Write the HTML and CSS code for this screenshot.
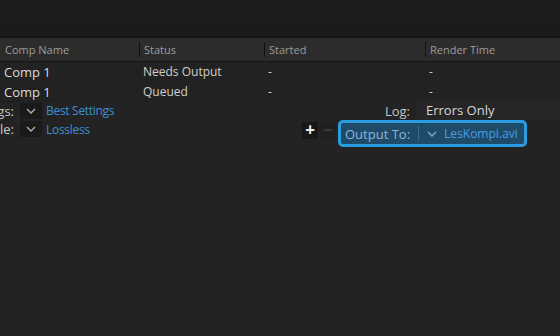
FILE: index.html
```html
<!DOCTYPE html>
<html>
<head>
	<title>Render Queue</title>
	<link rel="stylesheet" href="styles.css">
</head>
<body>
	<div class="top-band"></div>
	<div class="queue">
		<div class="row head">
			<div class="cell c1">Comp Name</div>
			<div class="cell c2">Status</div>
			<div class="cell c3">Started</div>
			<div class="cell c4">Render Time</div>
		</div>
		<div class="row item">
			<div class="cell c1 name">Comp 1</div>
			<div class="cell c2">Needs Output</div>
			<div class="cell c3">-</div>
			<div class="cell c4">-</div>
		</div>
		<div class="row item alt">
			<div class="cell c1 name">Comp 1</div>
			<div class="cell c2">Queued</div>
			<div class="cell c3">-</div>
			<div class="cell c4">-</div>
		</div>
	</div>
	<div class="settings">
		<div class="set-row">
			<div class="set-label"><span>Render Settings:</span></div>
			<div class="drop"><svg width="10" height="6" viewBox="0 0 10 6"><path d="M1 1l4 4 4-4" fill="none" stroke="#b0b0b0" stroke-width="1.4"/></svg></div>
			<a class="link">Best Settings</a>
			<div class="spacer"></div>
			<div class="log-label">Log:</div>
			<div class="log-field">Errors Only</div>
		</div>
		<div class="set-row second">
			<div class="set-label"><span>Output Module:</span></div>
			<div class="drop"><svg width="10" height="6" viewBox="0 0 10 6"><path d="M1 1l4 4 4-4" fill="none" stroke="#b0b0b0" stroke-width="1.4"/></svg></div>
			<a class="link">Lossless</a>
			<div class="spacer"></div>
			<div class="btn plus">+</div>
			<div class="btn minus">&minus;</div>
			<div class="output-to">
				<span class="out-label">Output To:</span>
				<span class="out-sep"></span>
				<svg width="10" height="6" viewBox="0 0 10 6"><path d="M1 1l4 4 4-4" fill="none" stroke="#7fa9cc" stroke-width="1.4"/></svg>
				<a class="out-file">LesKompi.avi</a>
			</div>
		</div>
	</div>
</body>
</html>
```

FILE: styles.css
```css
body {
	margin: 0;
	width: 560px;
	height: 336px;
	overflow: hidden;
	background-color: #232323;
	font-family: "Open Sans", "Noto Sans", sans-serif;
	font-size: 12px;
	color: #cfcfcf;
}
.top-band {
	height: 37px;
	background: linear-gradient(#1d1d1d, #1a1a1a);
	border-bottom: 1px solid #121212;
}
.row {
	display: flex;
	align-items: center;
}
.head {
	height: 23px;
	background-color: #2c2c2c;
	border-bottom: 1px solid #151515;
	font-size: 11px;
	color: #9c9c9c;
}
.item {
	height: 19px;
	background-color: #222;
	border-bottom: 1px solid #1e1e1e;
}
.cell {
	box-sizing: border-box;
	padding-left: 4px;
	white-space: nowrap;
}
.head .cell {
	border-left: 1px solid #111;
	height: 15px;
	line-height: 15px;
}
.head .c1 {
	border-left: none;
	padding-left: 5px;
}
.c1 { width: 139px; }
.c2 { width: 125px; }
.c3 { width: 161px; }
.c4 { flex: 1; }
.name {
	font-size: 13px;
	color: #dadada;
}
.settings {
	margin-top: -1px;
}
.set-row {
	display: flex;
	align-items: center;
	height: 19px;
}
.set-row.second {
	align-items: flex-start;
	height: 27px;
}
.set-label {
	width: 14px;
	overflow: hidden;
	display: flex;
	justify-content: flex-end;
	white-space: nowrap;
	color: #c8c8c8;
	font-size: 13px;
	margin-right: 6px;
}
.second .set-label,
.second .drop,
.second .link {
	margin-top: 1px;
	line-height: 17px;
}
.drop {
	width: 22px;
	height: 16px;
	background-color: #1a1a1a;
	display: flex;
	align-items: center;
	justify-content: center;
}
.link {
	color: #3b8ed8;
	margin-left: 4px;
	font-size: 12px;
	letter-spacing: -0.3px;
}
.spacer {
	flex: 1;
}
.log-label {
	color: #c4c4c4;
	font-size: 13px;
	margin-right: 7px;
}
.log-field {
	width: 143px;
	height: 19px;
	line-height: 19px;
	box-sizing: border-box;
	padding-left: 9px;
	background-color: #262626;
	color: #d6d6d6;
	font-size: 13px;
}
.btn {
	width: 16px;
	height: 17px;
	margin-top: 2px;
	line-height: 16px;
	text-align: center;
	font-size: 17px;
	font-weight: 700;
}
.plus {
	background-color: #181818;
	color: #f0f0f0;
}
.minus {
	margin-left: 2px;
	color: #3c3c3c;
	background-color: #202020;
}
.output-to {
	display: flex;
	align-items: center;
	gap: 8px;
	width: 189px;
	height: 27px;
	margin-left: 2px;
	margin-right: 33px;
	box-sizing: border-box;
	padding-left: 4px;
	border: 3px solid #2a9de0;
	border-radius: 5px;
	background-color: #1f4b6b;
}
.out-label {
	color: #8db6d6;
	font-size: 13px;
}
.out-sep {
	width: 1px;
	height: 15px;
	background-color: #3a6a8c;
}
.out-file {
	color: #4a9de2;
	margin-left: -1px;
}
```
